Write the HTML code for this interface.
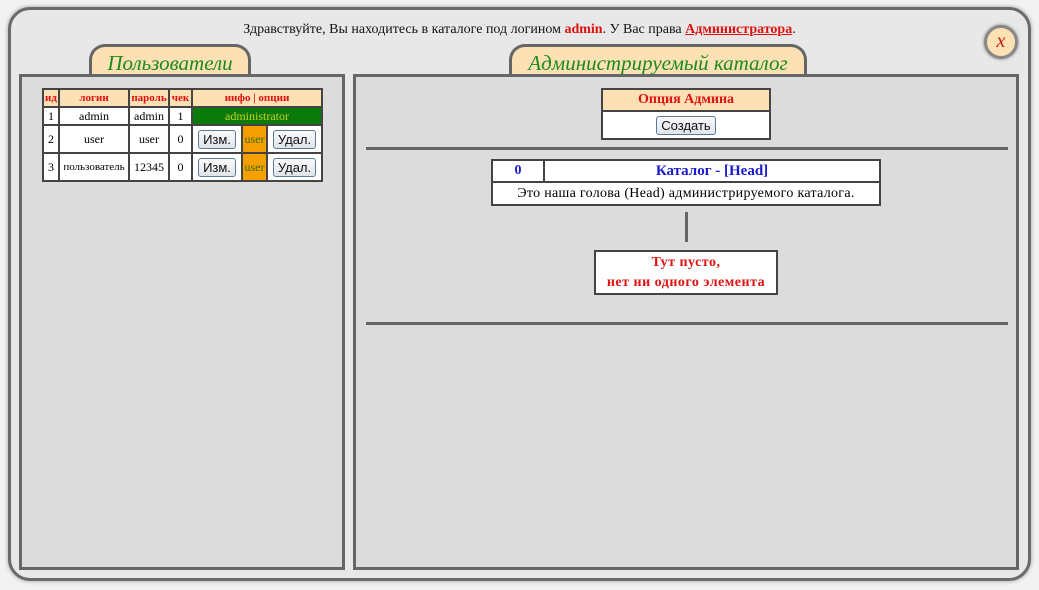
<!DOCTYPE html>
<html><head><meta charset="utf-8"><style>
*{box-sizing:border-box;margin:0;padding:0}
body{width:1039px;height:590px;background:#f2f2f2;font-family:"Liberation Serif",serif;position:relative;overflow:hidden}
.a{position:absolute}
.win{left:8px;top:7px;width:1023px;height:574px;border:3px solid #6a6a6a;border-radius:22px;background:#e8e8e8;box-shadow:0 0 4px #999}
.panel{border:3px solid #666;background:#dcdcdc}
.tab{border:3px solid #666;border-bottom:none;border-radius:16px 16px 0 0;background:#fde0b4;color:#1a8a1a;font-style:italic;font-size:21px;text-align:center;line-height:32px}
table{border-collapse:collapse;background:#fff;position:absolute}
td{border:2px solid #444;text-align:center;font-size:12px;padding:0}
.h td{background:#fde0b4;color:#e01010;font-weight:bold}
.btn{display:inline-block;border:1px solid #5a7a9a;border-radius:3px;background:linear-gradient(#fafafa,#e0e4ea);font-family:"Liberation Sans",sans-serif;font-size:13px;padding:1px 4px;color:#111}
.hr{height:3px;background:#666;left:366px;width:642px}
.red{color:#e01010;font-weight:bold}
</style></head><body>
<div class="a win"></div>
<div class="a" style="left:0;top:22px;width:1039px;text-align:center;font-size:14px;color:#111">Здравствуйте, Вы находитесь в каталоге под логином <span class="red">admin</span>. У Вас права <span class="red" style="text-decoration:underline">Администратора</span>.</div>
<div class="a" style="left:984px;top:25px;width:34px;height:34px;border-radius:50%;background:#fde0b4;border:3px solid #888;box-shadow:0 0 3px #777;color:#c02020;font-style:italic;font-size:20px;text-align:center;line-height:26px">x</div>

<div class="a tab" style="left:89px;top:44px;width:162px;height:32px">Пользователи</div>
<div class="a tab" style="left:509px;top:44px;width:298px;height:32px">Администрируемый каталог</div>
<div class="a panel" style="left:19px;top:74px;width:326px;height:496px"></div>
<div class="a panel" style="left:353px;top:74px;width:666px;height:496px"></div>

<table style="left:42px;top:88px;width:281px">
<tr class="h" style="height:18px"><td style="width:16px;font-size:11px">ид</td><td style="width:70px;font-size:11px">логин</td><td style="width:40px;font-size:11px">пароль</td><td style="width:23px;font-size:11px">чек</td><td colspan="3" style="font-size:11px">инфо | опции</td></tr>
<tr style="height:18px"><td>1</td><td>admin</td><td>admin</td><td>1</td><td colspan="3" style="background:#0a7a0a;color:#c8d020">administrator</td></tr>
<tr style="height:28px"><td>2</td><td>user</td><td>user</td><td>0</td><td style="width:50px"><span class="btn">Изм.</span></td><td style="width:25px;background:#f5a000;color:#3a6a10">user</td><td><span class="btn">Удал.</span></td></tr>
<tr style="height:28px"><td>3</td><td style="font-size:11px">пользователь</td><td>12345</td><td>0</td><td><span class="btn">Изм.</span></td><td style="background:#f5a000;color:#3a6a10">user</td><td><span class="btn">Удал.</span></td></tr>
</table>

<table style="left:601px;top:88px;width:170px">
<tr class="h" style="height:22px"><td style="font-size:14px">Опция Админа</td></tr>
<tr style="height:28px"><td><span class="btn" style="font-size:13px">Создать</span></td></tr>
</table>
<div class="a hr" style="top:147px"></div>

<table style="left:491px;top:159px;width:390px">
<tr style="height:22px"><td style="width:52px;color:#1a1acc;font-weight:bold;font-size:14px">0</td><td style="color:#1a1acc;font-weight:bold;font-size:15px">Каталог - [Head]</td></tr>
<tr style="height:23px"><td colspan="2" style="font-size:14px;letter-spacing:0.3px">Это наша голова (Head) администрируемого каталога.</td></tr>
</table>
<div class="a" style="left:685px;top:212px;width:3px;height:30px;background:#666"></div>
<table style="left:594px;top:250px;width:184px">
<tr style="height:43px"><td class="red" style="font-size:14px;line-height:20px;letter-spacing:0.5px">Тут пусто,<br>нет ни одного элемента</td></tr>
</table>
<div class="a hr" style="top:322px"></div>
</body></html>
